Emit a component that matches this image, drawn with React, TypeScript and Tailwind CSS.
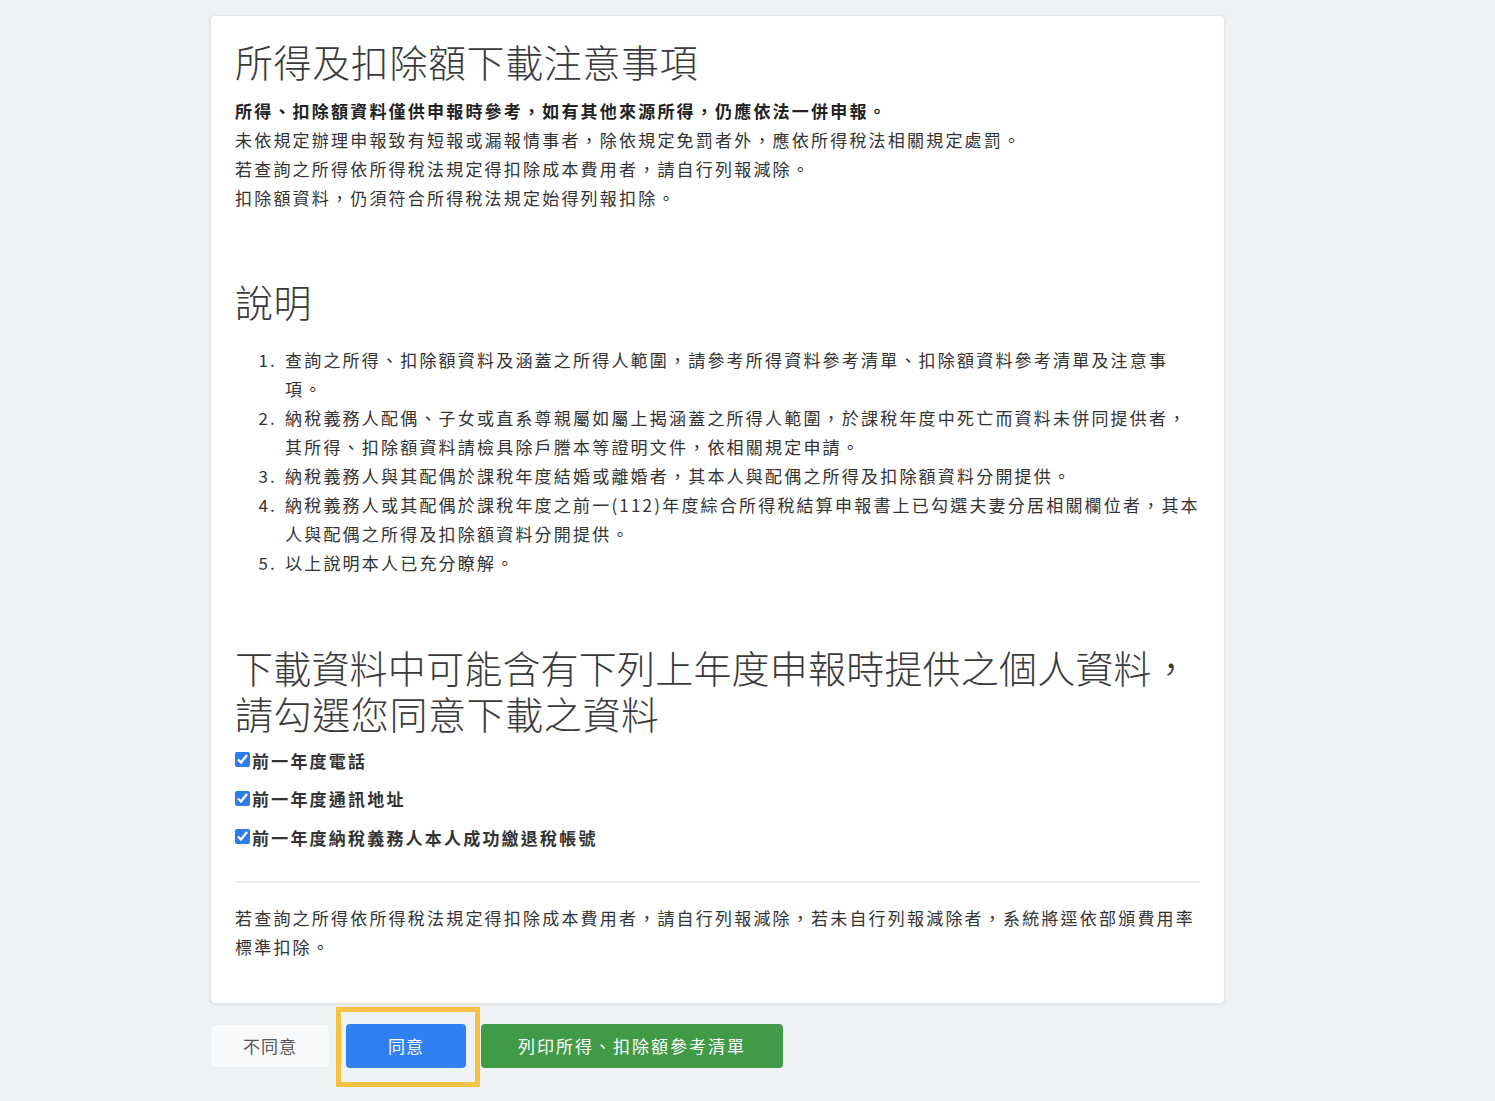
const font = "font-['Noto_Sans_CJK_TC','Noto_Sans',sans-serif]";

const notes = [
  "所得、扣除額資料僅供申報時參考，如有其他來源所得，仍應依法一併申報。",
  "未依規定辦理申報致有短報或漏報情事者，除依規定免罰者外，應依所得稅法相關規定處罰。",
  "若查詢之所得依所得稅法規定得扣除成本費用者，請自行列報減除。",
  "扣除額資料，仍須符合所得稅法規定始得列報扣除。",
];

const explain = [
  "查詢之所得、扣除額資料及涵蓋之所得人範圍，請參考所得資料參考清單、扣除額資料參考清單及注意事項。",
  "納稅義務人配偶、子女或直系尊親屬如屬上揭涵蓋之所得人範圍，於課稅年度中死亡而資料未併同提供者，其所得、扣除額資料請檢具除戶謄本等證明文件，依相關規定申請。",
  "納稅義務人與其配偶於課稅年度結婚或離婚者，其本人與配偶之所得及扣除額資料分開提供。",
  "納稅義務人或其配偶於課稅年度之前一(112)年度綜合所得稅結算申報書上已勾選夫妻分居相關欄位者，其本人與配偶之所得及扣除額資料分開提供。",
  "以上說明本人已充分瞭解。",
];

const options = ["前一年度電話", "前一年度通訊地址", "前一年度納稅義務人本人成功繳退稅帳號"];

const App = () => {
  return (
    <div className={`min-h-screen bg-[#eef2f5] pt-[15px] pb-8 ${font}`}>
      <div className="ml-[210px] w-[1015px]">
        <div className="rounded-[5px] bg-white border border-[#e3e7eb] shadow-[0_1px_3px_rgba(0,0,0,0.08)] px-[24px] pt-[22px] pb-[42px] text-[#333]">
          <h1 className="text-[38px] leading-[46px] font-light tracking-[0.6px] text-[#3a3a3a]">
            所得及扣除額下載注意事項
          </h1>
          <div className="mt-3 text-[17px] leading-[29px] tracking-[2.2px]">
            {notes.map((t, i) => (
              <p key={i} className={i === 0 ? "font-bold text-[#222]" : ""}>
                {t}
              </p>
            ))}
          </div>

          <h2 className="mt-[66px] text-[38px] leading-[46px] font-light tracking-[0.6px] text-[#3a3a3a]">
            說明
          </h2>
          <ol className="mt-[21px] list-decimal pl-[48px] text-[17px] leading-[29px] tracking-[2.2px]">
            {explain.map((t, i) => (
              <li key={i} className="pl-[2px]">
                {t}
              </li>
            ))}
          </ol>

          <h2 className="mt-[67px] text-[38px] leading-[46px] font-light tracking-[0.2px] text-[#3a3a3a]">
            下載資料中可能含有下列上年度申報時提供之個人資料，
            <br />
            <span className="tracking-[0.6px]">請勾選您同意下載之資料</span>
          </h2>
          <div className="mt-[10px] flex flex-col gap-[9.5px]">
            {options.map((o) => (
              <label key={o} className="flex items-center h-[29px] text-[17px] tracking-[2.2px] font-bold text-[#333]">
                <input
                  type="checkbox"
                  defaultChecked
                  className="w-[15px] h-[15px] m-0 mr-[2px] accent-[#2b7de9] -translate-y-[1px]"
                />
                {o}
              </label>
            ))}
          </div>

          <hr className="mt-[29px] border-0 border-t-2 border-[#e9ecef]" />

          <p className="mt-[20px] text-[17px] leading-[29px] tracking-[2.2px]">
            若查詢之所得依所得稅法規定得扣除成本費用者，請自行列報減除，若未自行列報減除者，系統將逕依部頒費用率標準扣除。
          </p>
        </div>

        <div className="mt-[20px] flex items-center">
          <button className="w-[120px] h-[44px] rounded-[4px] bg-[#f8f9fa] border border-[#eceef0] text-[17px] tracking-[1px] text-[#555]">
            不同意
          </button>
          <div className="relative ml-[16px]">
            <span className="absolute -top-[17px] -left-[10px] -right-[14px] -bottom-[19px] border-[5px] border-[#f6c244] pointer-events-none" />
            <button className="relative w-[120px] h-[44px] rounded-[4px] bg-[#3080f3] text-[17px] tracking-[1px] text-white">
              同意
            </button>
          </div>
          <button className="ml-[15px] w-[302px] h-[44px] rounded-[4px] bg-[#409a47] text-[17px] tracking-[2px] text-white">
            列印所得、扣除額參考清單
          </button>
        </div>
      </div>
    </div>
  );
};

export default App;
